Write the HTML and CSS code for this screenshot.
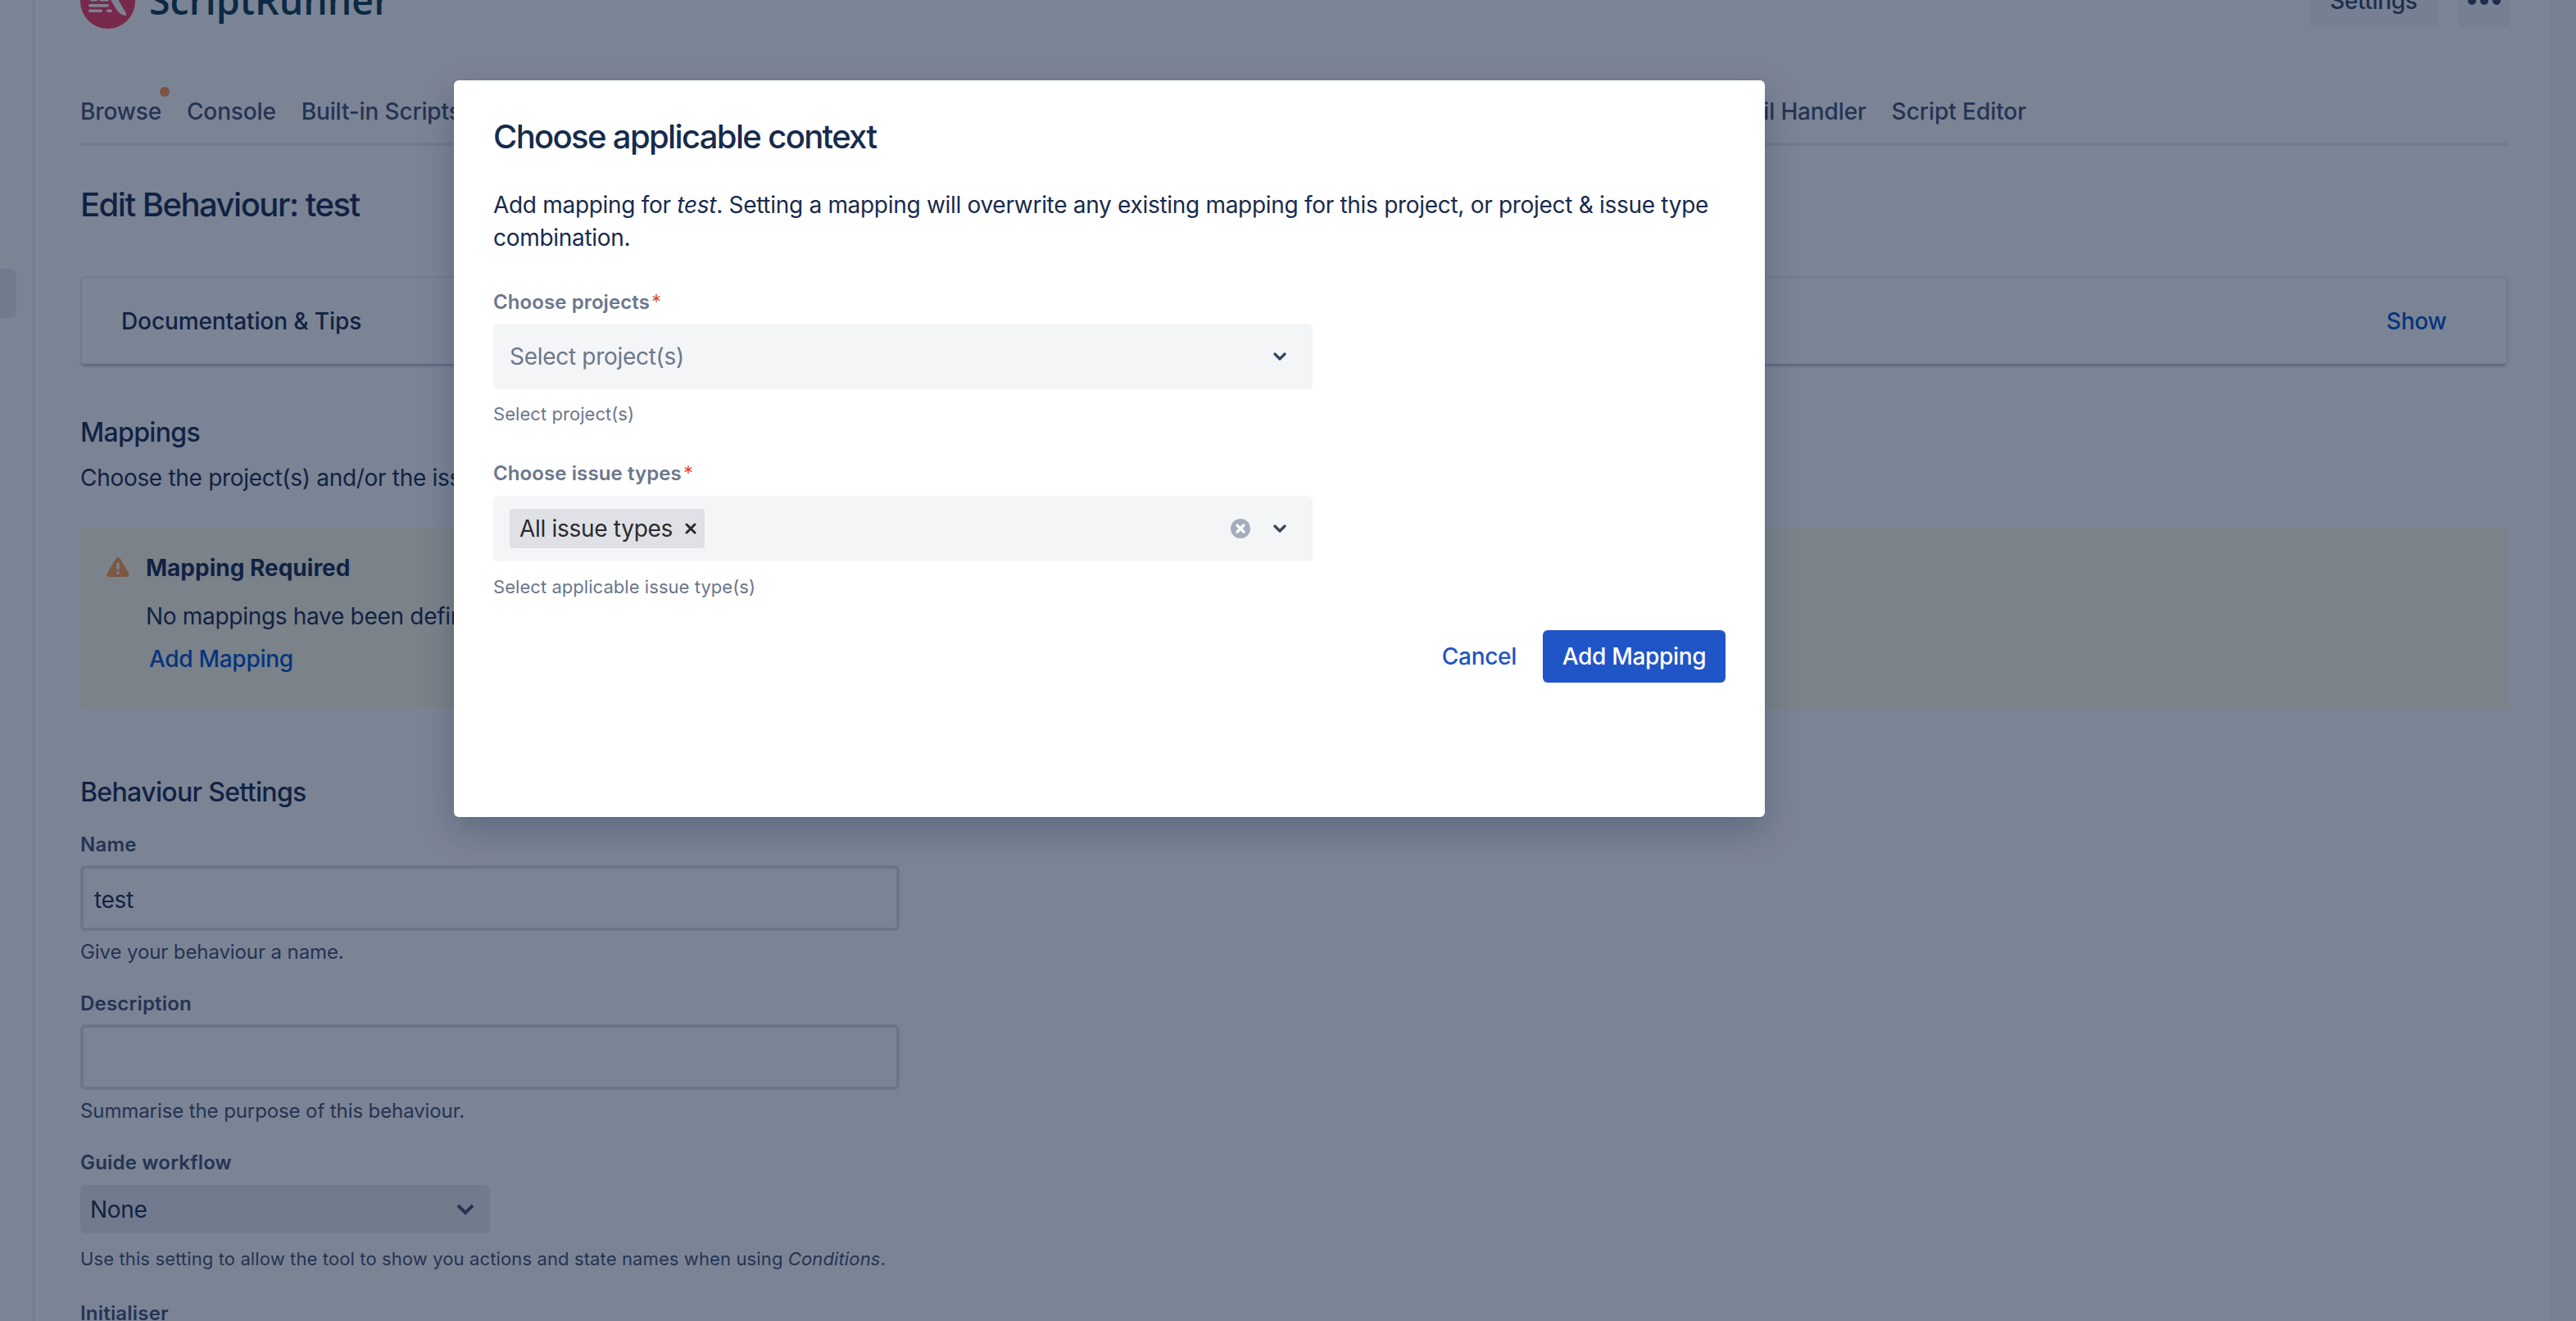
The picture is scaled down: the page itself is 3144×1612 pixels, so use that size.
FILE: index.html
```html
<!DOCTYPE html>
<html lang="en">
<head>
<meta charset="utf-8">
<title>Edit Behaviour: test</title>
<link rel="stylesheet" href="styles.css">
</head>
<body>
<div class="app">
  <aside class="rail"><div class="rail-pill"></div></aside>
  <main class="main">
    <header class="header">
      <div class="brand">
        <svg class="logo" viewBox="0 0 67 67" aria-hidden="true">
          <circle cx="33.5" cy="33.5" r="33.5" fill="#f9385c"/>
          <path d="M28 0 C36 12 44 28 50 38 C53 44 57 48 56 51 C50 51 46 47 42 40 L30 20 L22 0 Z" fill="#fff"/>
          <rect x="12" y="30" width="9" height="3.4" rx="1.7" fill="#fff"/>
          <rect x="23" y="30" width="12" height="3.4" rx="1.7" fill="#fff"/>
          <rect x="10" y="37" width="25" height="3.4" rx="1.7" fill="#fff"/>
          <rect x="10" y="43.5" width="17" height="3.4" rx="1.7" fill="#fff"/>
          <rect x="32" y="43.5" width="7" height="3.4" rx="1.7" fill="#fff"/>
        </svg>
        <span class="brand-name">ScriptRunner</span>
      </div>
      <div class="header-actions">
        <button class="ghost-btn settings-btn">Settings</button>
        <button class="ghost-btn more-btn" aria-label="More"><i></i><i></i><i></i></button>
      </div>
    </header>

    <nav class="tabs">
      <a class="tab tab-dot">Browse</a>
      <a class="tab">Console</a>
      <a class="tab">Built-in Scripts</a>
      <a class="tab">Listeners</a>
      <a class="tab">Fragments</a>
      <a class="tab">JQL Functions</a>
      <a class="tab">REST Endpoints</a>
      <a class="tab">Behaviours</a>
      <a class="tab">Jobs</a>
      <a class="tab tab-push">Mail Handler</a>
      <a class="tab">Script Editor</a>
    </nav>

    <h1 class="page-title">Edit Behaviour: test</h1>

    <section class="docs-card">
      <span class="docs-title">Documentation &amp; Tips</span>
      <a class="docs-link">Show</a>
    </section>

    <h2 class="section-title section-mappings">Mappings</h2>
    <p class="section-text">Choose the project(s) and/or the issue type(s) that this behaviour will apply to.</p>

    <section class="notice">
      <svg class="notice-icon" viewBox="0 0 28 24" aria-hidden="true">
        <path d="M11.4 1.6a3 3 0 0 1 5.2 0l10.6 18.2A2.8 2.8 0 0 1 24.8 24H3.2a2.8 2.8 0 0 1-2.4-4.2Z" fill="#ff9f4a"/>
        <rect x="12.4" y="6.5" width="3.2" height="9" rx="1.6" fill="#fff"/>
        <circle cx="14" cy="19" r="1.8" fill="#fff"/>
      </svg>
      <div class="notice-body">
        <h3 class="notice-title">Mapping Required</h3>
        <p class="notice-text">No mappings have been defined for this behaviour.</p>
        <a class="notice-link">Add Mapping</a>
      </div>
    </section>

    <h2 class="section-title section-settings">Behaviour Settings</h2>

    <label class="field-label field-first">Name</label>
    <div class="text-input">test</div>
    <p class="field-help">Give your behaviour a name.</p>

    <label class="field-label">Description</label>
    <div class="text-input"></div>
    <p class="field-help">Summarise the purpose of this behaviour.</p>

    <label class="field-label">Guide workflow</label>
    <div class="native-select">
      <span>None</span>
      <svg class="native-chevron" viewBox="0 0 24 16" aria-hidden="true"><path d="M3 3l9 9 9-9" fill="none" stroke="#42526e" stroke-width="4"/></svg>
    </div>
    <p class="field-help field-help-select">Use this setting to allow the tool to show you actions and state names when using <em>Conditions</em>.</p>

    <label class="field-label field-last">Initialiser</label>
  </main>
  <div class="scroll-strip"></div>
</div>

<div class="overlay">
  <div class="modal" role="dialog">
    <h2 class="modal-title">Choose applicable context</h2>
    <p class="modal-text">Add mapping for <em>test</em>. Setting a mapping will overwrite any existing mapping for this project, or project &amp; issue type combination.</p>

    <label class="modal-label modal-label-first">Choose projects<span class="req">*</span></label>
    <div class="select">
      <span class="select-placeholder">Select project(s)</span>
      <svg class="chevron" viewBox="0 0 16 10" aria-hidden="true"><path d="M2 2l6 6 6-6" fill="none" stroke="#344563" stroke-width="3.2" stroke-linecap="round" stroke-linejoin="round"/></svg>
    </div>
    <p class="modal-help">Select project(s)</p>

    <label class="modal-label">Choose issue types<span class="req">*</span></label>
    <div class="select">
      <span class="chip">All issue types
        <svg class="chip-x" viewBox="0 0 14 14" aria-hidden="true"><path d="M2 2l10 10M12 2L2 12" stroke="#2b2b2b" stroke-width="3" stroke-linecap="round"/></svg>
      </span>
      <svg class="clear" viewBox="0 0 24 24" aria-hidden="true"><circle cx="12" cy="12" r="12" fill="#a5adba"/><path d="M8 8l8 8M16 8l-8 8" stroke="#fff" stroke-width="3.2" stroke-linecap="round"/></svg>
      <svg class="chevron" viewBox="0 0 16 10" aria-hidden="true"><path d="M2 2l6 6 6-6" fill="none" stroke="#344563" stroke-width="3.2" stroke-linecap="round" stroke-linejoin="round"/></svg>
    </div>
    <p class="modal-help modal-help-last">Select applicable issue type(s)</p>

    <div class="modal-actions">
      <button class="link-btn">Cancel</button>
      <button class="primary-btn">Add Mapping</button>
    </div>
  </div>
</div>
</body>
</html>
```

FILE: styles.css
```css
* { box-sizing: border-box; }

html, body {
  margin: 0;
  height: 1612px;
  overflow: hidden;
}

body {
  position: relative;
  background: #fff;
  color: #172b4d;
  font-family: Inter, "Liberation Sans", sans-serif;
  font-size: 28px;
  letter-spacing: -.3px;
}

h1, h2, h3, p { margin: 0; }
button { font: inherit; letter-spacing: inherit; border: 0; }

.app { display: flex; height: 1612px; }

.rail {
  flex: 0 0 42px;
  border-right: 2px solid #ebecf0;
  padding-top: 328px;
}

.rail-pill {
  width: 20px;
  height: 60px;
  background: #ebecf0;
  border-radius: 0 6px 6px 0;
}

.main {
  flex: 1;
  min-width: 0;
  padding: 0 52px 0 56px;
}

.scroll-strip {
  flex: 0 0 31px;
  background: #f8f8f9;
}

.header {
  height: 33px;
  display: flex;
  justify-content: space-between;
  align-items: flex-end;
}

.brand {
  display: flex;
  align-items: flex-end;
  gap: 17px;
  margin-bottom: -2px;
}

.logo { width: 67px; height: 67px; flex: none; }

.brand-name {
  font-family: "Open Sans", sans-serif;
  font-weight: 600;
  font-size: 46.5px;
  line-height: 50px;
  letter-spacing: 0;
  margin-bottom: 10px;
  color: #0f3a50;
}

.header-actions {
  display: flex;
  gap: 24px;
  margin-right: -2px;
  align-items: flex-end;
}

.ghost-btn {
  height: 64px;
  border-radius: 6px;
  background: rgba(9, 30, 66, .04);
  color: #344563;
  font-weight: 500;
  display: flex;
  align-items: center;
  justify-content: center;
}

.settings-btn { width: 158px; }

.more-btn { width: 63px; gap: 5px; }

.more-btn i {
  width: 10px;
  height: 10px;
  border-radius: 50%;
  background: #344563;
}

.tabs {
  margin-top: 83px;
  padding: 0 588px 18px 0;
  border-bottom: 4px solid #ebecf0;
  display: flex;
  gap: 31px;
  line-height: 40px;
  letter-spacing: -.15px;
  white-space: nowrap;
}

.tab { color: #42526e; font-weight: 500; position: relative; }
.tab-push { margin-left: auto; }
.tab-push + .tab { letter-spacing: -.05px; }

.tab-dot::after {
  content: "";
  position: absolute;
  right: -10px;
  top: -10px;
  width: 12px;
  height: 12px;
  border-radius: 50%;
  background: #ff964a;
}

.page-title {
  margin-top: 48px;
  font-size: 40px;
  line-height: 48px;
  font-weight: 500;
  letter-spacing: -1.5px;
}

.docs-card {
  margin-top: 63px;
  height: 109px;
  border: 2px solid #ebecf0;
  border-bottom-color: #c1c7d0;
  border-radius: 6px;
  box-shadow: 0 2px 2px rgba(9, 30, 66, .15);
  display: flex;
  justify-content: space-between;
  align-items: center;
  padding: 0 73px 0 48px;
}

.docs-title { font-weight: 500; letter-spacing: -.1px; }
.docs-link { color: #0052cc; font-weight: 500; }

.section-title {
  font-size: 32px;
  line-height: 40px;
  font-weight: 500;
  letter-spacing: -.65px;
}

.section-mappings { margin-top: 62px; }
.section-settings { margin-top: 81px; }
.section-text { margin-top: 15px; line-height: 40px; white-space: nowrap; }

.notice {
  margin-top: 40px;
  height: 223px;
  background: #fffbe8;
  border-radius: 6px;
  padding: 30px 34px 0 32px;
  display: flex;
  gap: 20px;
}

.notice-icon { width: 28px; height: 24px; margin-top: 7px; flex: none; }

.notice-title {
  font-size: 28px;
  line-height: 40px;
  font-weight: 700;
  letter-spacing: 0;
}

.notice-text { margin-top: 19px; line-height: 40px; }

.notice-link {
  display: block;
  margin: 12px 0 0 4px;
  line-height: 40px;
  color: #0052cc;
  font-weight: 500;
}

.field-label {
  display: block;
  margin-top: 31px;
  font-size: 24px;
  line-height: 32px;
  font-weight: 600;
  letter-spacing: .2px;
  color: #42526e;
}

.field-first { margin-top: 28px; }
.field-last { margin-top: 35px; }

.text-input {
  margin-top: 9px;
  width: 1000px;
  height: 80px;
  border: 4px solid #dfe1e6;
  border-radius: 6px;
  padding: 0 13px;
  line-height: 76px;
}

.field-help {
  margin-top: 10px;
  font-size: 24px;
  line-height: 32px;
  letter-spacing: -.1px;
  color: #42526e;
}

.field-help-select {
  margin-top: 15px;
  font-size: 22px;
  letter-spacing: .12px;
}

.native-select {
  margin-top: 11px;
  width: 500px;
  height: 59px;
  border-radius: 6px;
  background: #ebecf0;
  padding: 0 18px 0 12px;
  display: flex;
  justify-content: space-between;
  align-items: center;
}

.native-chevron { width: 24px; height: 16px; }

.overlay {
  position: absolute;
  inset: 0;
  background: rgba(12, 27, 60, .54);
}

.modal {
  margin: 98px 0 0 554px;
  width: 1600px;
  height: 899px;
  padding: 45px 48px 0;
  background: #fff;
  border-radius: 6px;
  box-shadow: 0 0 2px rgba(9, 30, 66, .08), 0 16px 40px rgba(9, 30, 66, .25);
}

.modal-title {
  font-size: 40px;
  line-height: 48px;
  font-weight: 500;
  letter-spacing: -1.65px;
}

.modal-text { margin-top: 39px; line-height: 40px; letter-spacing: -.3px; }

.modal-label {
  display: block;
  margin-top: 41px;
  font-size: 24px;
  line-height: 32px;
  font-weight: 600;
  letter-spacing: .1px;
  color: #6b778c;
}

.modal-label-first { margin-top: 43px; }

.req { color: #de350b; font-weight: 300; margin-left: 2px; }

.select {
  margin-top: 11px;
  width: 1000px;
  height: 80px;
  background: #f4f5f7;
  border-radius: 6px;
  padding: 0 32px 0 20px;
  display: flex;
  align-items: center;
}

.modal-label-first + .select { margin-top: 10px; }

.select-placeholder { flex: 1; color: #6b778c; }

.chip {
  height: 48px;
  padding: 0 10px 0 12px;
  margin-right: auto;
  background: #dfe1e6;
  border-radius: 4px;
  color: #2b2b2b;
  display: flex;
  align-items: center;
  gap: 15px;
}

.chip-x { width: 14px; height: 14px; }
.clear { width: 24px; height: 24px; margin-right: 28px; }
.chevron { width: 16px; height: 10px; flex: none; }

.modal-help {
  margin-top: 14px;
  font-size: 22px;
  line-height: 32px;
  letter-spacing: .05px;
  color: #6b778c;
}

.modal-help-last { margin-top: 15px; }

.modal-actions {
  margin-top: 37px;
  display: flex;
  justify-content: flex-end;
  align-items: center;
  gap: 32px;
}

.link-btn { background: none; padding: 0; color: #1f55c7; font-weight: 500; }

.primary-btn {
  width: 223px;
  height: 64px;
  border-radius: 6px;
  background: #1f55c7;
  color: #fff;
  font-weight: 500;
}
```
